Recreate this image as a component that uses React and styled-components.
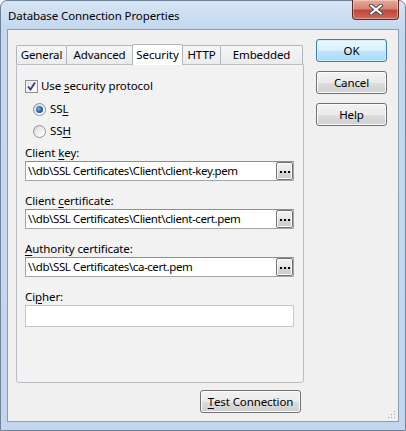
import React from "react";
import styled, { createGlobalStyle } from "styled-components";

const tabs = [
  { label: "General", w: 51 },
  { label: "Advanced", w: 67 },
  { label: "Security", w: 51, active: true },
  { label: "HTTP", w: 39 },
  { label: "Embedded", w: 83 },
];

const fields = [
  { pre: "Client ", key: "k", post: "ey:", value: "\\\\db\\SSL Certificates\\Client\\client-key.pem" },
  { pre: "Client ", key: "c", post: "ertificate:", value: "\\\\db\\SSL Certificates\\Client\\client-cert.pem" },
  { pre: "", key: "A", post: "uthority certificate:", value: "\\\\db\\SSL Certificates\\ca-cert.pem" },
];

function App() {
  return (
    <>
      <GlobalStyle />
      <Window>
        <TitleBar>
          <Title>Database Connection Properties</Title>
          <CloseButton>
            <svg width="14" height="11" viewBox="0 0 14 11">
              <path
                d="M2 1.5 L12 9.5 M12 1.5 L2 9.5"
                stroke="#4a4f58"
                strokeWidth="4"
                strokeLinecap="round"
              />
              <path
                d="M2 1.5 L12 9.5 M12 1.5 L2 9.5"
                stroke="#fff"
                strokeWidth="2"
                strokeLinecap="round"
              />
            </svg>
          </CloseButton>
        </TitleBar>
        <Client>
          <LeftColumn>
            <TabStrip>
              {tabs.map((t) => (
                <Tab key={t.label} $w={t.w} $active={t.active}>
                  {t.label}
                </Tab>
              ))}
            </TabStrip>
            <Panel>
              <OptionRow $top={13}>
                <CheckBox>
                  <svg width="11" height="11" viewBox="0 0 11 11">
                    <path
                      d="M2 5.5 L4.5 8.5 L9 1.5"
                      fill="none"
                      stroke="#2c3f7a"
                      strokeWidth="1.8"
                    />
                  </svg>
                </CheckBox>
                <span>
                  Use <u>s</u>ecurity protocol
                </span>
              </OptionRow>
              <OptionRow $top={7} $indent>
                <Radio $checked />
                <span>
                  SS<u>L</u>
                </span>
              </OptionRow>
              <OptionRow $top={6} $indent>
                <Radio />
                <span>
                  SS<u>H</u>
                </span>
              </OptionRow>
              {fields.map((f, i) => (
                <React.Fragment key={f.value}>
                  <FieldLabel $top={i === 0 ? 6 : 12}>
                    {f.pre}
                    <u>{f.key}</u>
                    {f.post}
                  </FieldLabel>
                  <Field>
                    <FieldText>{f.value}</FieldText>
                    <BrowseButton>
                      <svg width="10" height="3" viewBox="0 0 10 3">
                        <rect x="0" y="0" width="2" height="2" fill="#000" />
                        <rect x="4" y="0" width="2" height="2" fill="#000" />
                        <rect x="8" y="0" width="2" height="2" fill="#000" />
                      </svg>
                    </BrowseButton>
                  </Field>
                </React.Fragment>
              ))}
              <FieldLabel $top={12}>
                Ci<u>p</u>her:
              </FieldLabel>
              <CipherField />
            </Panel>
            <TestButton>
              <u>T</u>est Connection
            </TestButton>
          </LeftColumn>
          <RightColumn>
            <PushButton $default>OK</PushButton>
            <PushButton>Cancel</PushButton>
            <PushButton>Help</PushButton>
          </RightColumn>
          <Grip>
            <svg width="8" height="8" viewBox="0 0 8 8">
              <rect x="6" y="0" width="1" height="1" fill="#9aa0a8" />
              <rect x="3" y="3" width="1" height="1" fill="#9aa0a8" />
              <rect x="6" y="3" width="1" height="1" fill="#9aa0a8" />
              <rect x="0" y="6" width="1" height="1" fill="#9aa0a8" />
              <rect x="3" y="6" width="1" height="1" fill="#9aa0a8" />
              <rect x="6" y="6" width="1" height="1" fill="#9aa0a8" />
            </svg>
          </Grip>
        </Client>
      </Window>
    </>
  );
}

export default App;

const GlobalStyle = createGlobalStyle`
  html, body {
    margin: 0;
    padding: 0;
    background: #ffffff;
  }
  body {
    font-family: "Noto Sans", "Open Sans", sans-serif;
    font-size: 11.5px;
    letter-spacing: -0.1px;
    color: #000;
  }
  * {
    box-sizing: border-box;
  }
  u {
    text-decoration-thickness: 1px;
    text-underline-offset: 2px;
  }
`;

const Window = styled.div`
  width: 406px;
  height: 431px;
  border: 1px solid #6f829a;
  border-radius: 7px 7px 0 0;
  background: linear-gradient(to bottom, #d6e4f4 0px, #c4d8ee 28px, #c2d6ed 100%);
  display: flex;
  flex-direction: column;
  padding: 0 6px 8px 6px;
`;

const TitleBar = styled.div`
  height: 28px;
  display: flex;
  align-items: flex-start;
  justify-content: space-between;
`;

const Title = styled.div`
  padding-left: 1px;
  margin-top: 7px;
  line-height: 16px;
  color: #000;
`;

const CloseButton = styled.div`
  width: 47px;
  height: 20px;
  margin-top: -1px;
  border: 1px solid #5c2a25;
  border-top: none;
  border-radius: 0 0 4px 4px;
  background: linear-gradient(
    to bottom,
    #e8a898 0%,
    #d98473 45%,
    #c1493a 55%,
    #cf6b55 100%
  );
  box-shadow: inset 0 0 0 1px rgba(255, 255, 255, 0.35);
  display: flex;
  align-items: center;
  justify-content: center;
`;

const Client = styled.div`
  position: relative;
  flex: 1;
  background: #f0f0f0;
  border: 1px solid #8c9db3;
  display: flex;
  align-items: flex-start;
  gap: 12px;
  padding: 9px 10px 0 8px;
`;

const LeftColumn = styled.div`
  width: 288px;
  display: flex;
  flex-direction: column;
`;

const TabStrip = styled.div`
  height: 21px;
  margin-top: 5px;
  display: flex;
  align-items: flex-end;
  position: relative;
  z-index: 1;
  margin-bottom: -1px;
`;

const Tab = styled.div`
  width: ${(p) => p.$w}px;
  height: ${(p) => (p.$active ? 21 : 19)}px;
  margin-left: ${(p) => (p.$w === 51 && !p.$active ? 0 : -1)}px;
  margin-bottom: ${(p) => (p.$active ? 0 : 1)}px;
  border: 1px solid #b1b6be;
  border-bottom: none;
  border-radius: 2px 2px 0 0;
  background: ${(p) =>
    p.$active ? "#ffffff" : "linear-gradient(to bottom, #f5f6f7 0%, #e9ebee 100%)"};
  display: flex;
  align-items: center;
  justify-content: center;
  padding-bottom: ${(p) => (p.$active ? 1 : 0)}px;
  line-height: 16px;
  position: relative;
  z-index: ${(p) => (p.$active ? 2 : 1)};
  color: #000;
`;

const Panel = styled.div`
  height: 319px;
  border: 1px solid #b9bec6;
  border-radius: 0 0 3px 3px;
  background: #f2f2f2;
  padding: 0 9px 0 8px;
  display: flex;
  flex-direction: column;
`;

const OptionRow = styled.div`
  height: 16px;
  margin-top: ${(p) => p.$top}px;
  padding-left: ${(p) => (p.$indent ? 8 : 0)}px;
  display: flex;
  align-items: center;
  gap: ${(p) => (p.$indent ? 4 : 3)}px;
  line-height: 16px;
`;

const CheckBox = styled.span`
  width: 13px;
  height: 13px;
  border: 1px solid #8e8f8f;
  background: linear-gradient(135deg, #dcdcdc 0%, #ffffff 80%);
  box-shadow: inset 0 0 0 1px #f4f4f4;
  display: flex;
  align-items: center;
  justify-content: center;
`;

const Radio = styled.span`
  width: 13px;
  height: 13px;
  border-radius: 50%;
  border: 1px solid #8e8f8f;
  background: linear-gradient(135deg, #d6d6d6 0%, #ffffff 85%);
  display: flex;
  align-items: center;
  justify-content: center;

  &::after {
    content: "";
    display: ${(p) => (p.$checked ? "block" : "none")};
    width: 7px;
    height: 7px;
    border-radius: 50%;
    background: radial-gradient(circle at 40% 40%, #7fb4e8 0%, #2a5d9c 55%, #163f74 100%);
  }
`;

const FieldLabel = styled.div`
  height: 16px;
  margin-top: ${(p) => p.$top}px;
  line-height: 16px;
`;

const Field = styled.div`
  height: 20px;
  display: flex;
  border: 1px solid #a3a7ad;
  border-top-color: #8b8f96;
  background: #ffffff;
`;

const FieldText = styled.div`
  flex: 1;
  padding-left: 2px;
  line-height: 18px;
  letter-spacing: -0.4px;
  white-space: nowrap;
  overflow: hidden;
`;

const BrowseButton = styled.div`
  width: 17px;
  height: 18px;
  border: 1px solid #6f7378;
  border-radius: 2px;
  background: linear-gradient(to bottom, #f4f4f4 0%, #e6e6e6 50%, #d8d8d8 51%, #cbcbcb 100%);
  box-shadow: inset 0 0 0 1px #fbfbfb;
  display: flex;
  align-items: center;
  justify-content: center;
  padding-top: 2px;
`;

const CipherField = styled.div`
  height: 22px;
  border: 1px solid #c3c6cb;
  background: #ffffff;
`;

const PushButton = styled.div`
  width: 71px;
  height: 23px;
  border: 1px solid ${(p) => (p.$default ? "#3c7fb1" : "#707070")};
  border-radius: 3px;
  background: ${(p) =>
    p.$default
      ? "linear-gradient(to bottom, #eaf6fd 0%, #d9f0fc 50%, #bee6fd 51%, #a7d9f5 100%)"
      : "linear-gradient(to bottom, #f2f2f2 0%, #ebebeb 50%, #dddddd 51%, #cfcfcf 100%)"};
  box-shadow: inset 0 0 0 1px ${(p) => (p.$default ? "#cfeefc" : "#fcfcfc")};
  display: flex;
  align-items: center;
  justify-content: center;
  line-height: 16px;
`;

const TestButton = styled(PushButton)`
  width: 101px;
  align-self: flex-end;
  margin-top: 7px;
  margin-right: 3px;
`;

const RightColumn = styled.div`
  display: flex;
  flex-direction: column;
  gap: 9px;
`;

const Grip = styled.div`
  position: absolute;
  right: 2px;
  bottom: 2px;
  width: 8px;
  height: 8px;
  display: flex;
`;
